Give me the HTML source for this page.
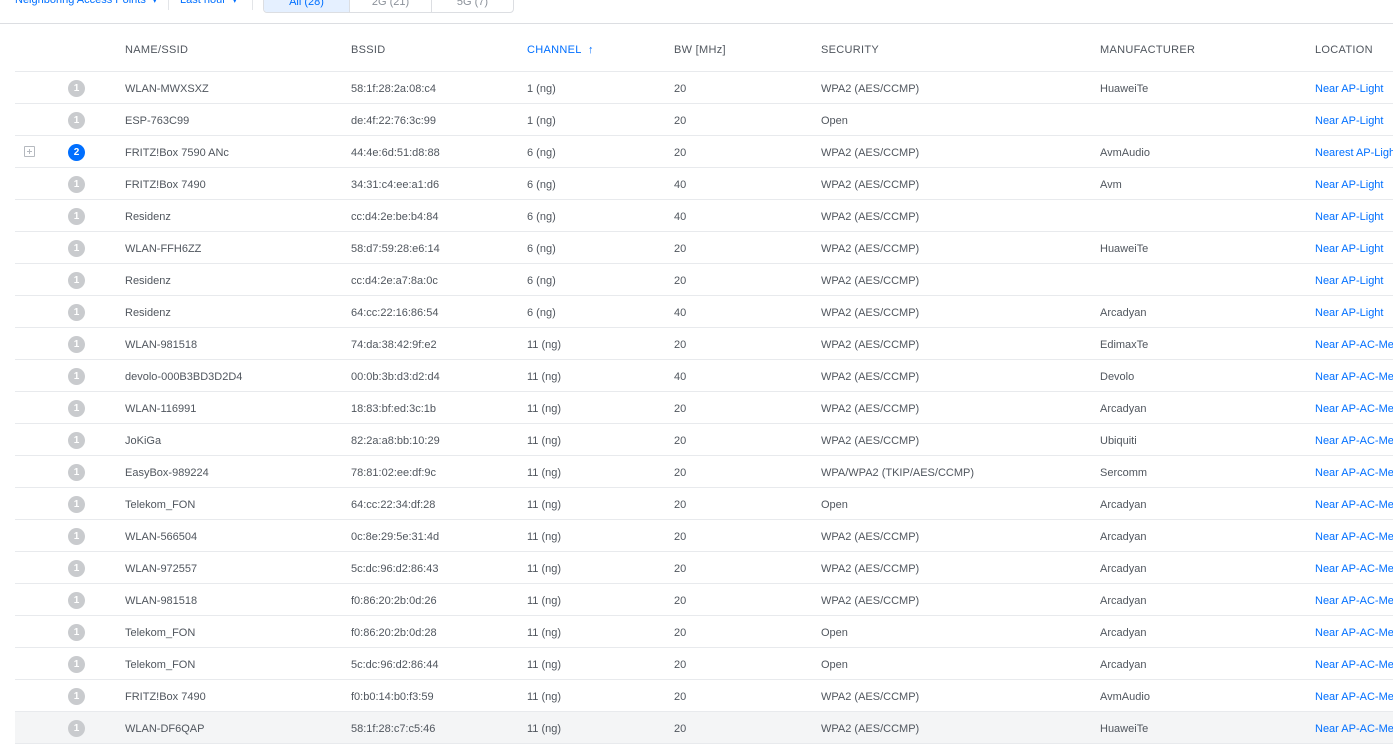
<!DOCTYPE html>
<html><head><meta charset="utf-8"><style>
*{margin:0;padding:0;box-sizing:border-box}
body{width:1393px;height:745px;overflow:hidden;background:#fff;font-family:"Liberation Sans",sans-serif;font-size:11px;color:#50565e;position:relative}
.top{position:absolute;left:0;top:0;width:1393px;height:24px;border-bottom:1px solid #dcdee2}
.tl{position:absolute;top:-7px;color:#006fff;font-size:11px}
.sep{position:absolute;top:0;width:1px;height:10px;background:#e3e5e8}
.seg{position:absolute;left:263px;top:-8px;width:251px;height:21px;border:1px solid #dcdee2;border-radius:0 0 4px 4px;display:flex;overflow:hidden}
.seg div{flex:1;text-align:center;line-height:19px;color:#8a9099;border-left:1px solid #dcdee2}
.seg div:first-child{border:none;background:#e5f0ff;color:#006fff;flex:0 0 85px}
.row{position:absolute;left:15px;width:1378px;height:32px;border-bottom:1px solid #e8eaed;line-height:31px;white-space:nowrap}
.row span{position:absolute;top:2px}
.hd span{top:0}
.hd{font-size:11px;letter-spacing:.3px;color:#50565e}
.b{position:absolute;left:53px;top:8px;width:17px;height:17px;border-radius:50%;background:#c9cbce;color:#fff;font-weight:bold;font-size:10px;line-height:17px;text-align:center}
.b.bl{background:#006fff}
.loc{color:#006fff}
.plus{position:absolute;left:9px;top:10px;width:11px;height:11px;border:1px solid #b5b9bf;border-radius:1px}
.plus:before{content:"";position:absolute;left:2px;top:4px;width:5px;height:1px;background:#b5b9bf}
.plus:after{content:"";position:absolute;left:4px;top:2px;width:1px;height:5px;background:#b5b9bf}
</style></head><body>
<div class="top">
<span class="tl" style="left:15px">Neighboring Access Points &nbsp;▾</span>
<div class="sep" style="left:168px"></div>
<span class="tl" style="left:180px">Last hour &nbsp;▾</span>
<div class="sep" style="left:252px"></div>
<div class="seg"><div>All (28)</div><div>2G (21)</div><div>5G (7)</div></div>
</div>
<div class="row hd" style="top:39px;height:33px;line-height:22px">
<span style="left:110px">NAME/SSID</span><span style="left:336px">BSSID</span><span style="left:512px;color:#006fff">CHANNEL &nbsp;↑</span><span style="left:659px">BW [MHz]</span><span style="left:806px">SECURITY</span><span style="left:1085px">MANUFACTURER</span><span style="left:1300px">LOCATION</span>
</div>
<div id="rows"></div>
<script>
var d=[
["1","WLAN-MWXSXZ","58:1f:28:2a:08:c4","1 (ng)","20","WPA2 (AES/CCMP)","HuaweiTe","Near AP-Light"],
["1","ESP-763C99","de:4f:22:76:3c:99","1 (ng)","20","Open","","Near AP-Light"],
["2","FRITZ!Box 7590 ANc","44:4e:6d:51:d8:88","6 (ng)","20","WPA2 (AES/CCMP)","AvmAudio","Nearest AP-Light"],
["1","FRITZ!Box 7490","34:31:c4:ee:a1:d6","6 (ng)","40","WPA2 (AES/CCMP)","Avm","Near AP-Light"],
["1","Residenz","cc:d4:2e:be:b4:84","6 (ng)","40","WPA2 (AES/CCMP)","","Near AP-Light"],
["1","WLAN-FFH6ZZ","58:d7:59:28:e6:14","6 (ng)","20","WPA2 (AES/CCMP)","HuaweiTe","Near AP-Light"],
["1","Residenz","cc:d4:2e:a7:8a:0c","6 (ng)","20","WPA2 (AES/CCMP)","","Near AP-Light"],
["1","Residenz","64:cc:22:16:86:54","6 (ng)","40","WPA2 (AES/CCMP)","Arcadyan","Near AP-Light"],
["1","WLAN-981518","74:da:38:42:9f:e2","11 (ng)","20","WPA2 (AES/CCMP)","EdimaxTe","Near AP-AC-Mesh"],
["1","devolo-000B3BD3D2D4","00:0b:3b:d3:d2:d4","11 (ng)","40","WPA2 (AES/CCMP)","Devolo","Near AP-AC-Mesh"],
["1","WLAN-116991","18:83:bf:ed:3c:1b","11 (ng)","20","WPA2 (AES/CCMP)","Arcadyan","Near AP-AC-Mesh"],
["1","JoKiGa","82:2a:a8:bb:10:29","11 (ng)","20","WPA2 (AES/CCMP)","Ubiquiti","Near AP-AC-Mesh"],
["1","EasyBox-989224","78:81:02:ee:df:9c","11 (ng)","20","WPA/WPA2 (TKIP/AES/CCMP)","Sercomm","Near AP-AC-Mesh"],
["1","Telekom_FON","64:cc:22:34:df:28","11 (ng)","20","Open","Arcadyan","Near AP-AC-Mesh"],
["1","WLAN-566504","0c:8e:29:5e:31:4d","11 (ng)","20","WPA2 (AES/CCMP)","Arcadyan","Near AP-AC-Mesh"],
["1","WLAN-972557","5c:dc:96:d2:86:43","11 (ng)","20","WPA2 (AES/CCMP)","Arcadyan","Near AP-AC-Mesh"],
["1","WLAN-981518","f0:86:20:2b:0d:26","11 (ng)","20","WPA2 (AES/CCMP)","Arcadyan","Near AP-AC-Mesh"],
["1","Telekom_FON","f0:86:20:2b:0d:28","11 (ng)","20","Open","Arcadyan","Near AP-AC-Mesh"],
["1","Telekom_FON","5c:dc:96:d2:86:44","11 (ng)","20","Open","Arcadyan","Near AP-AC-Mesh"],
["1","FRITZ!Box 7490","f0:b0:14:b0:f3:59","11 (ng)","20","WPA2 (AES/CCMP)","AvmAudio","Near AP-AC-Mesh"],
["1","WLAN-DF6QAP","58:1f:28:c7:c5:46","11 (ng)","20","WPA2 (AES/CCMP)","HuaweiTe","Near AP-AC-Mesh"]];
var h="",x=[110,336,512,659,806,1085];
d.forEach(function(r,i){
var t=72+i*32;
h+='<div class="row" style="top:'+t+'px'+(i==20?';background:#f4f5f6':'')+'">';
if(r[0]=="2")h+='<div class="plus"></div>';
h+='<div class="b'+(r[0]=="2"?' bl':'')+'">'+r[0]+'</div>';
for(var k=0;k<6;k++)h+='<span style="left:'+x[k]+'px">'+r[k+1]+'</span>';
h+='<span class="loc" style="left:1300px">'+r[7]+'</span></div>';
});
document.getElementById("rows").innerHTML=h;
</script>
</body></html>
